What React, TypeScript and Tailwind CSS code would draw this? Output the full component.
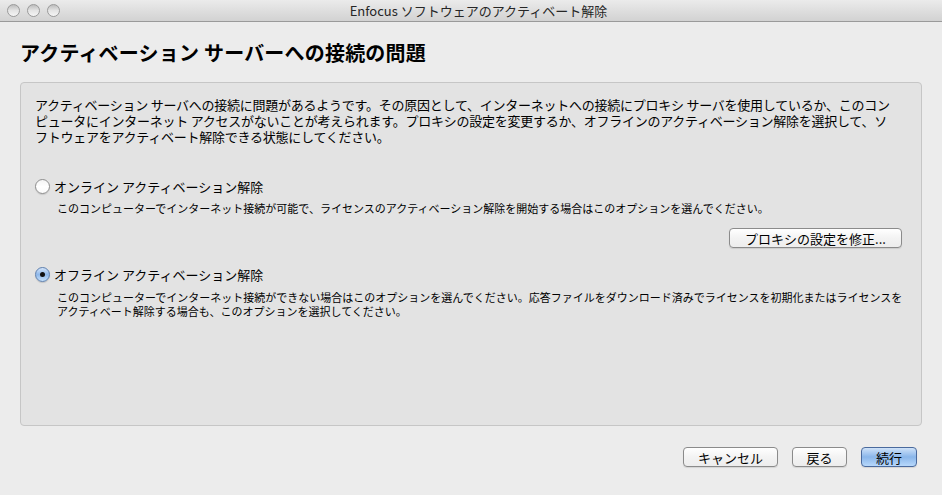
import React from "react";

const font = { fontFamily: '"Noto Sans CJK JP", "Liberation Sans", sans-serif' };

function Radio({ checked }: { checked?: boolean }) {
  return checked ? (
    <div className="w-[15px] h-[15px] rounded-full border border-[#5d7fae] bg-gradient-to-b from-[#d4e5fa] via-[#8fb8ea] to-[#c5e0fb] flex items-center justify-center shrink-0 shadow-[0_1px_1px_rgba(0,0,0,0.15)]">
      <div className="w-[5px] h-[5px] rounded-full bg-[#111]" />
    </div>
  ) : (
    <div className="w-[15px] h-[15px] rounded-full border border-[#8e8e8e] bg-gradient-to-b from-[#f4f4f4] via-[#ffffff] to-[#fbfbfb] shrink-0 shadow-[0_1px_1px_rgba(0,0,0,0.12)]" />
  );
}

function Button({ children, w, primary }: { children: React.ReactNode; w: string; primary?: boolean }) {
  return (
    <div
      className={`${w} h-[20px] rounded-[4px] border flex items-center justify-center text-[13px] text-black leading-none ${
        primary
          ? "border-[#4a6a9d] bg-gradient-to-b from-[#cfe2f8] via-[#8ab6ea] to-[#b7d8fb]"
          : "border-[#8b8b8b] bg-gradient-to-b from-[#ffffff] via-[#f3f3f3] to-[#ededed]"
      } shadow-[0_1px_1px_rgba(0,0,0,0.1)]`}
    >
      {children}
    </div>
  );
}

export default function App() {
  return (
    <div className="w-[942px] h-[495px] bg-[#ececec] flex flex-col overflow-hidden text-black" style={font}>
      <div className="h-[22px] shrink-0 bg-gradient-to-b from-[#ebebeb] to-[#d2d2d2] border-b border-[#9a9a9a] flex items-center relative">
        <div className="absolute left-[7px] top-[4px] flex gap-[7px]">
          {[0, 1, 2].map((i) => (
            <div
              key={i}
              className="w-[13px] h-[13px] rounded-full border border-[#9a9a9a] bg-gradient-to-b from-[#bdbdbd] via-[#e4e4e4] to-[#f5f5f5]"
            />
          ))}
        </div>
        <div className="flex-1 text-center text-[13px] text-[#262626] leading-none pl-[15px] pb-[1px]">
          Enfocus ソフトウェアのアクティベート解除
        </div>
      </div>

      <div className="pl-[20px] pt-[21px] h-[38px] text-[20px] font-bold leading-none tracking-[0.2px] shrink-0">
        アクティベーション サーバーへの接続の問題
      </div>

      <div className="mt-[22px] mx-[20px] h-[344px] shrink-0 rounded-[4px] border border-[#c6c6c6] bg-[#e3e3e3] pl-[14px] pr-[19px] pt-[14px] flex flex-col">
        <div className="text-[13px] leading-[16px] tracking-[-0.25px] whitespace-nowrap">
          <div>アクティベーション サーバへの接続に問題があるようです。その原因として、インターネットへの接続にプロキシ サーバを使用しているか、このコン</div>
          <div>ピュータにインターネット アクセスがないことが考えられます。プロキシの設定を変更するか、オフラインのアクティベーション解除を選択して、ソ</div>
          <div>フトウェアをアクティベート解除できる状態にしてください。</div>
        </div>

        <div className="mt-[32px] h-[18px] flex items-center gap-[4px]">
          <Radio />
          <span className="text-[13px] leading-none">オンライン アクティベーション解除</span>
        </div>
        <div className="mt-[6px] pl-[22px] text-[11px] leading-[14px] whitespace-nowrap">
          このコンピューターでインターネット接続が可能で、ライセンスのアクティベーション解除を開始する場合はこのオプションを選んでください。
        </div>
        <div className="mt-[13px] flex justify-end">
          <Button w="w-[173px]">プロキシの設定を修正...</Button>
        </div>

        <div className="mt-[17px] h-[18px] flex items-center gap-[4px]">
          <Radio checked />
          <span className="text-[13px] leading-none">オフライン アクティベーション解除</span>
        </div>
        <div className="mt-[7px] pl-[22px] text-[11px] leading-[14px] whitespace-nowrap">
          <div>このコンピューターでインターネット接続ができない場合はこのオプションを選んでください。応答ファイルをダウンロード済みでライセンスを初期化またはライセンスを</div>
          <div>アクティベート解除する場合も、このオプションを選択してください。</div>
        </div>
      </div>

      <div className="mt-[21px] pr-[25px] flex justify-end gap-[14px]">
        <Button w="w-[95px]">キャンセル</Button>
        <Button w="w-[55px]">戻る</Button>
        <Button w="w-[56px]" primary>続行</Button>
      </div>
    </div>
  );
}
